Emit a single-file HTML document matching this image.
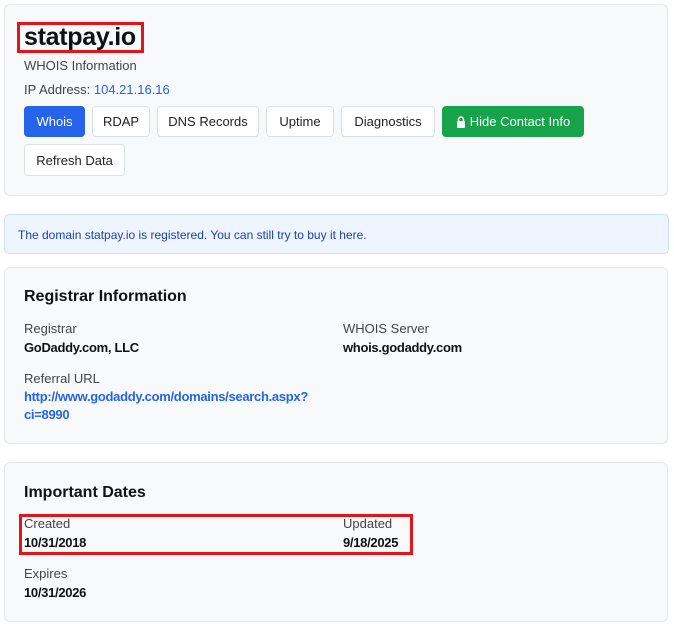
<!DOCTYPE html><html><head><style>
body{margin:0;width:674px;height:627px;background:#fff;font-family:"Liberation Sans",sans-serif;position:relative;overflow:hidden}
.a{position:absolute;white-space:nowrap}
.card{position:absolute;left:4px;width:664px;background:#f8f9fb;border:1px solid #e4e7eb;border-radius:6px;box-sizing:border-box}
.btn{position:absolute;top:106px;height:31px;border:1px solid #dcdfe4;border-radius:4px;background:#fff;box-sizing:border-box;font-size:13px;color:#222;display:flex;align-items:center;justify-content:center}
.lb{font-size:13px;color:#444}.v{font-size:13px;font-weight:bold;color:#111;letter-spacing:-0.3px}
.h{font-size:16px;font-weight:bold;color:#111}
.red{position:absolute;border:3px solid #e5141b;box-sizing:border-box}
</style></head><body>
<div class="card" style="top:4px;height:192px"></div>
<div class="a" style="left:24px;top:23px;font-size:25px;font-weight:bold;color:#111;letter-spacing:-0.3px">statpay.io</div>
<div class="red" style="left:17px;top:22px;width:127px;height:31px"></div>
<div class="a lb" style="left:24px;top:58px">WHOIS Information</div>
<div class="a lb" style="left:24px;top:82px">IP Address: <span style="color:#2563eb">104.21.16.16</span></div>
<div class="btn" style="left:24px;width:61px;background:#2563eb;border-color:#2563eb;color:#fff">Whois</div>
<div class="btn" style="left:92px;width:58px">RDAP</div>
<div class="btn" style="left:157px;width:102px">DNS Records</div>
<div class="btn" style="left:266px;width:68px">Uptime</div>
<div class="btn" style="left:341px;width:94px">Diagnostics</div>
<div class="btn" style="left:442px;width:142px;background:#16a34a;border-color:#16a34a;color:#fff"><svg width="10" height="12" viewBox="0 0 10 12" style="margin-right:4px"><path d="M2.5 5V3.5a2.5 2.5 0 0 1 5 0V5" stroke="#fff" stroke-width="1.5" fill="none"/><rect x="1" y="5" width="8" height="7" rx="1" fill="#fff"/></svg>Hide Contact Info</div>
<div class="btn" style="left:24px;top:144px;width:101px;height:32px">Refresh Data</div>
<div class="a" style="left:4px;top:214px;width:665px;height:40px;background:#eef5fe;border:1px solid #cde0fa;border-radius:5px;box-sizing:border-box"></div>
<div class="a" style="left:18px;top:228px;font-size:12px;color:#1e40af">The domain statpay.io is registered. You can still try to buy it here.</div>
<div class="card" style="top:267px;height:177px"></div>
<div class="a h" style="left:24px;top:288px">Registrar Information</div>
<div class="a lb" style="left:24px;top:321px">Registrar</div>
<div class="a v" style="left:24px;top:340px">GoDaddy.com, LLC</div>
<div class="a lb" style="left:343px;top:321px">WHOIS Server</div>
<div class="a v" style="left:343px;top:340px">whois.godaddy.com</div>
<div class="a lb" style="left:24px;top:371px">Referral URL</div>
<div class="a v" style="left:24px;top:389px;color:#2563eb">http://www.godaddy.com/domains/search.aspx?</div>
<div class="a v" style="left:24px;top:407px;color:#2563eb">ci=8990</div>
<div class="card" style="top:462px;height:160px"></div>
<div class="a h" style="left:24px;top:484px">Important Dates</div>
<div class="a lb" style="left:24px;top:516px">Created</div>
<div class="a v" style="left:24px;top:535px">10/31/2018</div>
<div class="a lb" style="left:343px;top:516px">Updated</div>
<div class="a v" style="left:343px;top:535px">9/18/2025</div>
<div class="red" style="left:19px;top:514px;width:394px;height:41px"></div>
<div class="a lb" style="left:24px;top:566px">Expires</div>
<div class="a v" style="left:24px;top:585px">10/31/2026</div>
</body></html>
